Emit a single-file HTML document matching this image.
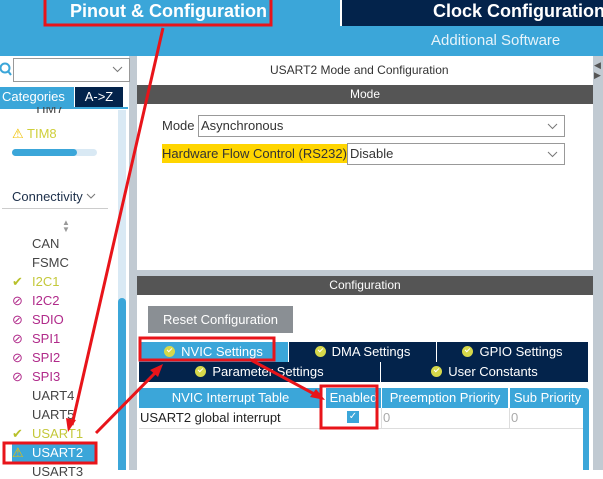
<!DOCTYPE html><html><head><style>
body{margin:0;width:603px;height:470px;overflow:hidden;position:relative;font-family:"Liberation Sans",sans-serif;background:#fff}
div{position:absolute;box-sizing:border-box}
.t{white-space:nowrap}
.ok{display:inline-block;width:11px;height:11px;border-radius:50%;background:#d6d84a;vertical-align:-1px;margin-right:6px;position:relative}
.ok:after{content:"";position:absolute;left:3px;top:2px;width:4px;height:2px;border-left:1.5px solid #fff;border-bottom:1.5px solid #fff;transform:rotate(-45deg)}
.it{left:32px;font-size:13px;color:#444}
.ic{position:absolute;left:-20px;font-size:13px}
.tab{color:#fff;font-size:13px;text-align:center;line-height:20px}
.chev{position:absolute;right:6px;top:7px}
</style></head><body>
<div style="left:0;top:0;width:603px;height:56px;background:#3ba6d9"></div>
<div style="left:340px;top:0;width:263px;height:26px;background:#03234b;border-left:2px solid #fff"></div>
<div class="t" style="left:433px;top:1px;font-size:18px;font-weight:bold;color:#fff">Clock Configuration</div>
<div class="t" style="left:431px;top:32px;font-size:15px;color:#e6f3fa">Additional Software</div>
<div class="t" style="left:70px;top:1px;font-size:18px;font-weight:bold;color:#fff">Pinout &amp; Configuration</div>
<!-- left panel -->
<div style="left:0;top:56px;width:129px;height:414px;background:#fff"></div>
<div style="left:129px;top:56px;width:8px;height:414px;background:#c1cad2"></div>
<svg style="position:absolute;left:0;top:62px" width="12" height="16"><circle cx="5" cy="6" r="4.5" fill="none" stroke="#3ba6d9" stroke-width="2"/><line x1="8" y1="9" x2="11" y2="13" stroke="#3ba6d9" stroke-width="2"/></svg>
<div style="left:13px;top:58px;width:117px;height:24px;border:1px solid #999"><svg class="chev" width="11" height="7"><polyline points="1,1 5.5,5.5 10,1" fill="none" stroke="#777"/></svg></div>
<div style="left:0;top:87px;width:74px;height:20px;background:#3ba6d9;color:#fff;font-size:13px;line-height:20px;padding-left:2px">Categories</div>
<div style="left:75px;top:87px;width:48px;height:20px;background:#03234b;color:#fff;font-size:13px;line-height:20px;text-align:center">A-&gt;Z</div>
<div style="left:0;top:107px;width:128px;height:2px;background:#3ba6d9"></div>
<div style="left:118px;top:110px;width:8px;height:360px;background:#d9e9f4"></div>
<div style="left:118px;top:298px;width:8px;height:172px;background:#3ba6d9;border-radius:4px 4px 0 0"></div>
<div class="t" style="left:34px;top:107px;font-size:13px;color:#444;height:8px;overflow:hidden;line-height:3px">TIM7</div>
<div class="t" style="left:12px;top:126px;font-size:13px;color:#cfcf3a"><span style="color:#f0c000">&#9888;</span> TIM8</div>
<div style="left:12px;top:149px;width:85px;height:7px;border-radius:4px;background:#d9e9f4"></div>
<div style="left:12px;top:149px;width:65px;height:7px;border-radius:4px;background:#3ba6d9"></div>
<div class="t" style="left:12px;top:189px;font-size:13px;color:#1c2f4a">Connectivity</div>
<svg style="position:absolute;left:86px;top:193px" width="10" height="6"><polyline points="1,1 5,5 9,1" fill="none" stroke="#777"/></svg>
<div style="left:2px;top:208px;width:106px;height:1px;background:#ccc"></div>
<div style="left:62px;top:219px;font-size:8px;color:#999;line-height:7px">&#9650;<br>&#9660;</div>
<div class="t it" style="top:236px">CAN</div>
<div class="t it" style="top:255px">FSMC</div>
<div class="t it" style="top:274px;color:#c4c83a"><span class="ic" style="color:#b8c02a">&#10004;</span>I2C1</div>
<div class="t it" style="top:293px;color:#b02a8a"><span class="ic">&#8856;</span>I2C2</div>
<div class="t it" style="top:312px;color:#b02a8a"><span class="ic">&#8856;</span>SDIO</div>
<div class="t it" style="top:331px;color:#b02a8a"><span class="ic">&#8856;</span>SPI1</div>
<div class="t it" style="top:350px;color:#b02a8a"><span class="ic">&#8856;</span>SPI2</div>
<div class="t it" style="top:369px;color:#b02a8a"><span class="ic">&#8856;</span>SPI3</div>
<div class="t it" style="top:388px">UART4</div>
<div class="t it" style="top:407px">UART5</div>
<div class="t it" style="top:426px;color:#c4c83a"><span class="ic" style="color:#b8c02a">&#10004;</span>USART1</div>
<div style="left:12px;top:443px;width:84px;height:19px;background:#3ba6d9"></div>
<div class="t it" style="top:445px;color:#fff"><span class="ic" style="color:#f0c000">&#9888;</span>USART2</div>
<div class="t it" style="top:464px">USART3</div>
<!-- main -->
<div style="left:593px;top:56px;width:10px;height:414px;background:#c1cad2"></div>
<div style="left:594px;top:60px;font-size:9px;color:#555;line-height:10px">&#9664;<br>&#9654;</div>
<div class="t" style="left:270px;top:63px;font-size:12px;color:#333">USART2 Mode and Configuration</div>
<div style="left:137px;top:85px;width:456px;height:19px;background:#555;color:#fff;font-size:12px;text-align:center;line-height:19px">Mode</div>
<div class="t" style="left:162px;top:118px;font-size:13px;color:#333">Mode</div>
<div style="left:198px;top:115px;width:367px;height:22px;border:1px solid #999;font-size:13px;color:#333;padding:2px 2px">Asynchronous<svg class="chev" width="11" height="7"><polyline points="1,1 5.5,5.5 10,1" fill="none" stroke="#777"/></svg></div>
<div class="t" style="left:162px;top:144px;height:19px;background:#ffd500;font-size:13px;color:#333;line-height:19px">Hardware Flow Control (RS232)</div>
<div style="left:347px;top:143px;width:218px;height:22px;border:1px solid #999;font-size:13px;color:#333;padding:2px 2px">Disable<svg class="chev" width="11" height="7"><polyline points="1,1 5.5,5.5 10,1" fill="none" stroke="#777"/></svg></div>
<div style="left:137px;top:270px;width:456px;height:6px;background:#c1cad2"></div>
<div style="left:137px;top:276px;width:456px;height:19px;background:#555;color:#fff;font-size:12px;text-align:center;line-height:19px">Configuration</div>
<div style="left:148px;top:306px;width:145px;height:27px;background:#8a8f94;color:#fff;font-size:13px;text-align:center;line-height:27px">Reset Configuration</div>
<div class="tab" style="left:139px;top:342px;width:149px;background:#3ba6d9"><span class="ok"></span>NVIC Settings</div>
<div class="tab" style="left:289px;top:342px;width:147px;background:#03234b"><span class="ok"></span>DMA Settings</div>
<div class="tab" style="left:437px;top:342px;width:151px;background:#03234b"><span class="ok"></span>GPIO Settings</div>
<div class="tab" style="left:139px;top:362px;width:241px;background:#03234b"><span class="ok"></span>Parameter Settings</div>
<div class="tab" style="left:381px;top:362px;width:207px;background:#03234b"><span class="ok"></span>User Constants</div>
<div class="tab" style="left:139px;top:388px;width:183px;background:#3ba6d9">NVIC Interrupt Table</div>
<div class="tab" style="left:326px;top:388px;width:55px;background:#3ba6d9">Enabled</div>
<div class="tab" style="left:382px;top:388px;width:126px;background:#3ba6d9">Preemption Priority</div>
<div class="tab" style="left:510px;top:388px;width:75px;background:#3ba6d9">Sub Priority</div>
<div style="left:583px;top:388px;width:6px;height:82px;background:#3ba6d9;border-radius:3px 3px 0 0"></div>
<div class="t" style="left:140px;top:410px;font-size:13px;color:#222">USART2 global interrupt</div>
<div style="left:347px;top:411px;width:12px;height:12px;background:#3ba6d9;color:#fff;font-size:10px;text-align:center;line-height:12px">&#10003;</div>
<div class="t" style="left:383px;top:410px;font-size:13px;color:#aaa">0</div>
<div class="t" style="left:511px;top:410px;font-size:13px;color:#aaa">0</div>
<div style="left:381px;top:408px;width:1px;height:20px;background:#ddd"></div>
<div style="left:509px;top:408px;width:1px;height:20px;background:#ddd"></div>
<div style="left:139px;top:428px;width:444px;height:1px;background:#ddd"></div>
<!-- annotations -->
<svg style="position:absolute;left:0;top:0" width="603" height="470">
<g fill="none" stroke="#e8141a" stroke-width="3">
<rect x="45" y="-2" width="226" height="27"/>
<rect x="140" y="338" width="134" height="22"/>
<rect x="321" y="386" width="56" height="42"/>
<rect x="4" y="443" width="92" height="20"/>
<line x1="163" y1="28" x2="72" y2="425"/>
<line x1="96" y1="433" x2="158" y2="370"/>
<line x1="251" y1="360" x2="318" y2="396"/>
</g>
<g fill="#e8141a">
<polygon points="68,432 66,418 76,420"/>
<polygon points="163,364 150,370 158,377"/>
<polygon points="325,400 310,397 316,389"/>
</g>
</svg>
</body></html>
